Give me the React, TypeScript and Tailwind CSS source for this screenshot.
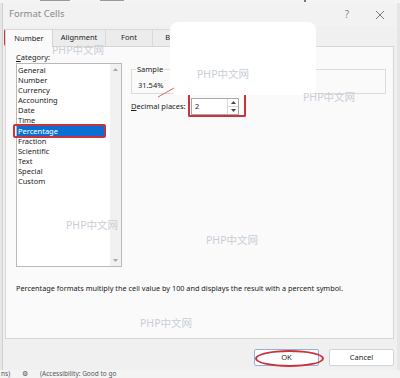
const CATEGORIES = [
  "General",
  "Number",
  "Currency",
  "Accounting",
  "Date",
  "Time",
  "Percentage",
  "Fraction",
  "Scientific",
  "Text",
  "Special",
  "Custom",
];

const TABS = [
  { label: "Number", w: "w-[48px]" },
  { label: "Alignment", w: "w-[53px]" },
  { label: "Font", w: "w-[47px]" },
  { label: "Border", w: "w-[50px]" },
  { label: "Fill", w: "w-[34px]" },
  { label: "Protection", w: "w-[54px]" },
];

const MARKS = [
  "left-[52px] top-[44px]",
  "left-[197px] top-[68px]",
  "left-[303px] top-[91px]",
  "left-[66px] top-[219px]",
  "left-[206px] top-[234px]",
  "left-[140px] top-[317px]",
];

export default function App() {
  return (
    <div
      className="relative w-[400px] h-[378px] overflow-hidden bg-[#e6e6e6] text-[#1b1b1b] flex flex-col"
      style={{ fontFamily: '"Noto Sans", "Noto Sans CJK SC", sans-serif' }}
    >
      {/* sheet behind, only a sliver shows */}
      <div className="h-[3px] shrink-0 bg-[#f4f4f4] flex items-start gap-[30px] pl-[40px]">
        <div className="w-[30px] h-[1px] bg-[#9a9a9a]" />
        <div className="w-[24px] h-[1px] bg-[#9a9a9a]" />
        <div className="w-[2px] h-[2px] bg-[#777] ml-[150px]" />
      </div>

      {/* dialog */}
      <div className="ml-[2px] w-[395px] h-[367px] shrink-0 bg-[#f0f0f0] border-l border-[#cfcfcf] flex flex-col">
        {/* title bar */}
        <div className="h-[23px] flex items-center justify-between pl-[6px] pr-[12px] bg-[#f2f2f2]">
          <span className="text-[9.5px] text-[#8a8a8a]">Format Cells</span>
          <div className="flex items-center gap-[26px]">
            <span className="text-[10px] text-[#8a8a8a]">?</span>
            <svg width="10" height="10" viewBox="0 0 10 10">
              <path d="M1 1 L9 9 M9 1 L1 9" stroke="#7a7a7a" strokeWidth="1" />
            </svg>
          </div>
        </div>

        {/* tabs */}
        <div className="mt-[3px] h-[17px] flex pl-[2px] text-[7.5px]">
          {TABS.map((t, i) => (
            <div
              key={t.label}
              className={
                i === 0
                  ? `${t.w} h-[18px] flex items-center justify-center bg-[#fafafa] border border-b-0 border-[#d6d6d6] relative z-10`
                  : `${t.w} h-[17px] flex items-center justify-center bg-[#ececec] border-t border-r border-[#d9d9d9]`
              }
            >
              {t.label}
            </div>
          ))}
        </div>

        {/* tab panel */}
        <div className="ml-[2px] w-[389px] h-[293px] bg-[#fafafa] border border-[#d6d6d6] flex flex-col text-[7.5px] leading-[9px]">
          <div className="flex pl-[10px] pt-[6px]">
            <div className="flex flex-col w-[106px]">
              <span>
                <span className="underline">C</span>ategory:
              </span>
              <div className="mt-[1px] h-[204px] bg-white border border-[#b9b9b9] flex">
                <div className="flex-1 pt-[1px]">
                  {CATEGORIES.map((c) => (
                    <div
                      key={c}
                      className={
                        c === "Percentage"
                          ? "h-[10.1px] leading-[10.1px] pl-[1px] mr-[4px] bg-[#0a6fd0] text-white"
                          : "h-[10.1px] leading-[10.1px] pl-[1px]"
                      }
                    >
                      {c}
                    </div>
                  ))}
                </div>
                <div className="w-[11px] bg-[#f1f1f1] flex flex-col items-center justify-between py-[4px]">
                  <svg width="5" height="3" viewBox="0 0 5 3">
                    <path d="M0 3 L2.5 0 L5 3 Z" fill="#a8a8a8" />
                  </svg>
                  <svg width="5" height="3" viewBox="0 0 5 3">
                    <path d="M0 0 L2.5 3 L5 0 Z" fill="#a8a8a8" />
                  </svg>
                </div>
              </div>
            </div>

            <div className="ml-[9px] pt-[16px] flex flex-col">
              <div className="relative w-[255px] h-[25px] border border-[#dcdcdc]">
                <span className="absolute left-[4px] -top-[5px] bg-[#fafafa] px-[1px]">Sample</span>
                <span className="absolute left-[6px] top-[11px]">31.54%</span>
              </div>
              <div className="mt-[4px] flex items-center">
                <span className="w-[60px]">
                  <span className="underline">D</span>ecimal places:
                </span>
                <div className="w-[48px] h-[17px] bg-white border border-[#a9a9a9] flex">
                  <span className="flex-1 pl-[3px] leading-[15px]">2</span>
                  <div className="w-[11px] flex flex-col border-l border-[#dadada]">
                    <div className="flex-1 flex items-center justify-center border-b border-[#dadada]">
                      <svg width="5" height="3" viewBox="0 0 5 3">
                        <path d="M0 3 L2.5 0 L5 3 Z" fill="#444" />
                      </svg>
                    </div>
                    <div className="flex-1 flex items-center justify-center">
                      <svg width="5" height="3" viewBox="0 0 5 3">
                        <path d="M0 0 L2.5 3 L5 0 Z" fill="#444" />
                      </svg>
                    </div>
                  </div>
                </div>
              </div>
            </div>
          </div>

          <p className="pl-[10px] mt-[17px] text-[7.3px]">
            Percentage formats multiply the cell value by 100 and displays the result with a percent symbol.
          </p>
        </div>

        {/* buttons */}
        <div className="mt-[10px] flex justify-end gap-[10px] pr-[3px] text-[7.5px]">
          <button className="w-[65px] h-[17px] bg-white border border-[#8fb3d6] rounded-[2px]">OK</button>
          <button className="w-[65px] h-[17px] bg-white border border-[#d3d3d3] rounded-[2px]">Cancel</button>
        </div>
      </div>

      {/* status bar behind */}
      <div className="flex-1 bg-[#f3f3f3] overflow-hidden">
        <div className="pl-[1px] text-[6.5px] leading-[8px] text-[#555] whitespace-nowrap flex gap-[12px]">
          <span>ns)</span>
          <span>⚙</span>
          <span>(Accessibility: Good to go</span>
        </div>
      </div>

      {/* white cover block */}
      <div className="absolute left-[170px] top-[22px] w-[146px] h-[73px] bg-white rounded-[8px]" />

      {/* watermarks */}
      {MARKS.map((m) => (
        <span key={m} className={`absolute ${m} text-[10.5px] leading-[12px] text-[#c9ced6]`}>
          PHP中文网
        </span>
      ))}

      {/* red highlights */}
      <div className="absolute left-[4px] top-[29px] w-[48px] h-[17px] border-2 border-[#c9333d] rounded-[2px]" />
      <div className="absolute left-[13px] top-[124px] w-[93px] h-[14px] border-2 border-[#c9333d] rounded-[2px]" />
      <div className="absolute left-[188px] top-[95px] w-[58px] h-[22px] border-2 border-t-0 border-[#c9333d] rounded-b-[2px]" />
      <div className="absolute left-[255px] top-[350px] w-[69px] h-[17px] border-2 border-[#c9333d] rounded-[50%]" />
      <svg className="absolute left-[157px] top-[87px]" width="20" height="11" viewBox="0 0 20 11">
        <path d="M1 10 L17 1" stroke="#d46a70" strokeWidth="1" />
      </svg>
    </div>
  );
}
